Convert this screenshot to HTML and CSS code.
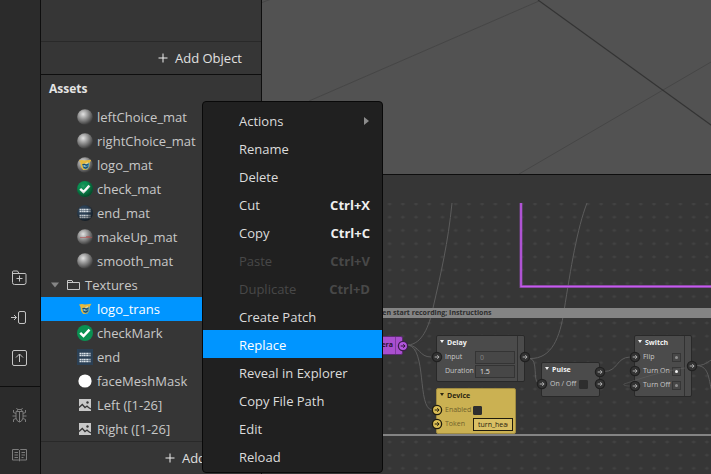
FILE: index.html
```html
<!DOCTYPE html>
<html lang="en">
<head>
<meta charset="utf-8">
<title>Patch editor</title>
<link rel="stylesheet" href="styles.css">
</head>
<body>
<svg class="defs" aria-hidden="true">
  <defs>
    <radialGradient id="ball" cx="38%" cy="32%" r="68%">
      <stop offset="0" stop-color="#e2e2e2"/><stop offset=".35" stop-color="#a8a8a8"/><stop offset="1" stop-color="#3c3c3c"/>
    </radialGradient>
    <radialGradient id="shade" cx="38%" cy="32%" r="68%">
      <stop offset="0" stop-color="#fff" stop-opacity=".15"/><stop offset=".4" stop-color="#000" stop-opacity="0"/><stop offset="1" stop-color="#000" stop-opacity=".5"/>
    </radialGradient>
    <symbol id="sphere" viewBox="0 0 16 16"><circle cx="8" cy="8" r="7.8" fill="url(#ball)"/></symbol>
    <symbol id="logo" viewBox="0 0 16 16">
      <path d="M2 3.500 5 3l3 .6 6.500-.8-1.500 2.400-.8 5-2 2.600-4 .2-2.200-3L3.500 6z" fill="#e5b93c"/>
      <path d="M5 7.500 7 6.500l2 .5 3.500-1.500-.5 4.500-2.500 2.500-3-1z" fill="#4a95b8"/>
      <path d="M5.500 7.500h2.500l.8.800 2.500-.8M6.500 10l2 1.200 2.500-1.400" fill="none" stroke="#1f4560" stroke-width="1.100"/>
      <path d="M8.500 6.500 11 5.800M7 9h1.500" stroke="#efe6c0" stroke-width=".9"/>
    </symbol>
    <symbol id="check" viewBox="0 0 16 16">
      <circle cx="8" cy="8" r="8" fill="#0a9152"/><path d="m3.200 7.800 3.300 3.200 6-6.400" fill="none" stroke="#fff" stroke-width="2.500"/>
    </symbol>
    <symbol id="port" viewBox="0 0 12 12">
      <circle cx="6" cy="6" r="4.600" fill="var(--fill)" stroke="var(--ring)" stroke-width="1.300"/>
      <path d="M3.700 6h4.300M6.300 4.200 8.100 6 6.300 7.800" fill="none" stroke="var(--arrow)"/>
    </symbol>
    <symbol id="picture" viewBox="0 0 16 16">
      <path d="M2 2h12v12H2z" fill="#c8c8c8"/><path d="m2 10.500 3.300-3 2.700 3 2-1.500 1.500 1.500L14 12" fill="none" stroke="#363636" stroke-width="1.300"/><circle cx="10.500" cy="5.500" r="1.200" fill="#363636"/>
    </symbol>
    <symbol id="end-tile" viewBox="0 0 16 16">
      <path d="M0 0h16v16H0z" fill="#2b4055"/><path d="M2.500 4.500h11M2.500 6.500h11M2.500 10.500h11M2.500 12.500h11" stroke="#dde4ea" stroke-width="1.400" stroke-dasharray="1.800 .4 1.200 .4 2.400 .5"/>
    </symbol>
    <clipPath id="round"><circle cx="8" cy="8" r="7.800"/></clipPath>
  </defs>
</svg>
<div class="app">
  <nav class="rail" aria-label="Tools">
    <div class="rail-group rail-top">
      <button aria-label="Add asset folder"><svg viewBox="0 0 18 18"><path d="M2.500 3v10.500a2 2 0 0 0 2 2h9.500a2 2 0 0 0 2-2V5.500a1 1 0 0 0-1-1H9L7.500 2h-4a1 1 0 0 0-1 1zM2.500 4.500H9M6.500 9.500h6M9.500 6.500v6"/></svg></button>
      <button aria-label="Import"><svg viewBox="0 0 18 18"><rect x="8.500" y="2.500" width="7" height="12" rx="1.500"/><path d="M1 8.500h5.500M4 6l2.500 2.500L4 11"/></svg></button>
      <button aria-label="Publish"><svg viewBox="0 0 18 18"><rect x="2.500" y="1.500" width="14" height="15" rx="1.500"/><path d="M9.500 13V5M6 8.500 9.500 5 13 8.500"/></svg></button>
    </div>
    <div class="rail-group rail-bottom">
      <button aria-label="Report a bug"><svg viewBox="0 0 18 18"><path d="M6 5.500h7v6.500l-1.500 3-2 1-2-1L6 12zM7 5.500 7.500 3.500h4l.5 2M9.500 6v10M6.500 2l1 1.500M12.500 2l-1 1.500M6 7.500 3.500 6.500V4M13 7.500l2.500-1V4M6 10H2.500M13 10h3.500M6 12.500l-2.500 1V16M13 12.500l2.500 1V16"/></svg></button>
      <button aria-label="Documentation"><svg viewBox="0 0 18 18"><path d="M9.500 4.500 8.500 3.500h-6v10.500h6l1 .8 1-.8h6V3.500h-6zV15M4.500 6.500H8M4.500 9H8M4.500 11.500H8M11.500 6.500h3.500M11.500 9h3.500M11.500 11.500h2"/></svg></button>
    </div>
  </nav>

  <aside class="panel">
    <div class="scene"></div>
    <div class="add-row"><button class="add"><svg viewBox="0 0 10 10"><path d="M5 .5v9M.5 5h9"/></svg>Add Object</button></div>
    <section class="assets">
      <h2>Assets</h2>
      <ul class="tree">
        <li><button><svg><use href="#sphere"/></svg>leftChoice_mat</button></li>
        <li><button><svg><use href="#sphere"/></svg>rightChoice_mat</button></li>
        <li><button><svg viewBox="0 0 16 16"><use href="#sphere"/><g clip-path="url(#round)"><use href="#logo"/></g></svg>logo_mat</button></li>
        <li><button><svg viewBox="0 0 16 16"><use href="#check"/><circle cx="8" cy="8" r="8" fill="url(#shade)"/></svg>check_mat</button></li>
        <li><button><svg viewBox="0 0 16 16"><g clip-path="url(#round)"><use href="#end-tile"/></g><circle cx="8" cy="8" r="8" fill="url(#shade)"/></svg>end_mat</button></li>
        <li><button><svg viewBox="0 0 16 16"><use href="#sphere"/><path d="M3 8.500h12M9 7.500h4" stroke="#b54c4c" stroke-opacity=".6"/></svg>makeUp_mat</button></li>
        <li><button><svg><use href="#sphere"/></svg>smooth_mat</button></li>
        <li><button class="folder" aria-expanded="true"><svg class="twist" viewBox="0 0 8 6"><path d="M0 .5h8L4 5.500z"/></svg><svg class="dir" viewBox="0 0 14 12"><path d="M.5 10.500V1.500h4.500l1 2h6.500v7zM.5 3.500H6"/></svg>Textures</button></li>
        <li><button class="selected"><svg><use href="#logo"/></svg>logo_trans</button></li>
        <li><button><svg><use href="#check"/></svg>checkMark</button></li>
        <li><button><svg><use href="#end-tile"/></svg>end</button></li>
        <li><button><svg viewBox="0 0 16 16"><circle cx="8" cy="8" r="6.600" fill="#fff"/></svg>faceMeshMask</button></li>
        <li><button><svg><use href="#picture"/></svg>Left ([1-26]</button></li>
        <li><button><svg><use href="#picture"/></svg>Right ([1-26]</button></li>
      </ul>
    </section>
    <div class="add-row"><button class="add"><svg viewBox="0 0 10 10"><path d="M5 .5v9M.5 5h9"/></svg>Add Asset</button></div>
  </aside>

  <main class="work">
    <div class="viewport">
      <svg aria-hidden="true"><g transform="translate(-262 0)" fill="none">
        <path d="M309 101 539 1M262 2.500l8-3M519 174 711 62l200-117" stroke="#464646"/>
        <path d="M538 0 711 125l200 144.500" stroke="#343434" stroke-width="1.200"/>
      </g></svg>
    </div>
    <div class="graph">
      <div class="canvas">
        <svg class="layer" aria-hidden="true">
          <defs><pattern id="dots" x="2" y="-5.600" width="13.220" height="13.220" patternUnits="userSpaceOnUse"><path d="M4.600 6.600h4M6.600 5.100v3" stroke="#454545"/></pattern></defs>
          <rect width="100%" height="100%" fill="url(#dots)"/>
          <g transform="translate(-262 -203)" fill="none" stroke="#5c5c5c">
            <path d="M408 345C422 344 429 327 433 308 441 273 448 243 452 203M408 345c12 1 11 12 23 12M408 345c19 3 9 63 24 65"/>
            <path d="M530 358.500C552 359 560 337 564 311 571 267 577 229 587 203M530 358.500c8 1 3 22 8 24.500M604 371.500c14 0 12-14 26-14.500M697 365.500c10 0 12-6 20-8M697 365.500c13 1 11 14 16 30"/>
            <path d="M521 203v83.500h400" stroke="#7b4691" stroke-width="3"/>
            <path d="M521 203v83.500h400" stroke="#c65af0" stroke-width="1.400"/>
          </g>
        </svg>
        <div class="note"><span>When start recording; Instructions</span></div>

        <section class="node camera"><h3>Camera</h3><svg class="port out p1"><use href="#port"/></svg></section>

        <section class="node strip delay">
          <h3>Delay</h3>
          <label for="d-in">Input</label><input id="d-in" type="text" value="0" disabled>
          <label for="d-du">Duration</label><input id="d-du" type="text" value="1.5">
          <svg class="port in p2"><use href="#port"/></svg><svg class="port out p2"><use href="#port"/></svg>
        </section>

        <section class="node device">
          <h3>Device</h3>
          <label for="v-en">Enabled</label><input id="v-en" type="checkbox">
          <label for="v-to">Token</label><input id="v-to" type="text" value="turn_head">
          <svg class="port in p2"><use href="#port"/></svg><svg class="port in p3"><use href="#port"/></svg>
        </section>

        <section class="node pulse">
          <h3>Pulse</h3>
          <label for="p-on">On / Off</label><input id="p-on" type="checkbox">
          <svg class="port in p2"><use href="#port"/></svg><svg class="port out p1"><use href="#port"/></svg><svg class="port out p2"><use href="#port"/></svg>
        </section>

        <section class="node strip switch">
          <h3>Switch</h3>
          <span>Flip</span><button class="pulse-dot" aria-label="Flip"></button>
          <span>Turn On</span><button class="pulse-dot lit" aria-label="Turn On"></button>
          <span>Turn Off</span><button class="pulse-dot" aria-label="Turn Off"></button>
          <svg class="port in p2"><use href="#port"/></svg><svg class="port in p3"><use href="#port"/></svg><svg class="port in p4"><use href="#port"/></svg><svg class="port out mid"><use href="#port"/></svg>
        </section>
        <svg class="layer wires" aria-hidden="true"><path d="M423 165C394 169 366 180 362 181c-1 1 1 2 6 2" fill="none" stroke="#656565" stroke-opacity=".5"/></svg>
      </div>
    </div>
  </main>
</div>

<div class="menu" role="menu">
  <button role="menuitem">Actions<svg class="more" viewBox="0 0 5 8"><path d="M0 0v8l5-4z"/></svg></button>
  <button role="menuitem">Rename</button>
  <button role="menuitem">Delete</button>
  <button role="menuitem">Cut<kbd>Ctrl+X</kbd></button>
  <button role="menuitem">Copy<kbd>Ctrl+C</kbd></button>
  <button role="menuitem" disabled>Paste<kbd>Ctrl+V</kbd></button>
  <button role="menuitem" disabled>Duplicate<kbd>Ctrl+D</kbd></button>
  <button role="menuitem">Create Patch</button>
  <button role="menuitem" class="selected">Replace</button>
  <button role="menuitem">Reveal in Explorer</button>
  <button role="menuitem">Copy File Path</button>
  <button role="menuitem">Edit</button>
  <button role="menuitem">Reload</button>
</div>
</body>
</html>
```
FILE: styles.css
```css
:root {
  --panel: #363636;
  --edge: #0e0e0e;
  --accent: #0095ff;
}
* { box-sizing: border-box; }
body {
  margin: 0;
  overflow: hidden;
  background: var(--panel);
  color: #c8c8c8;
  font: 13px/24px "Open Sans", "Noto Sans", sans-serif;
}
button {
  border: 0;
  padding: 0;
  background: none;
  color: inherit;
  font: inherit;
  text-align: left;
}
h2, h3, ul { margin: 0; padding: 0; }
ul { list-style: none; }
.defs { position: absolute; width: 0; height: 0; }
.app {
  display: grid;
  grid-template-columns: 41px 221px 1fr;
  height: 100vh;
}

/* Tool rail */
.rail {
  display: flex;
  flex-direction: column;
  background: #2b2b2b;
  border-right: 1px solid var(--edge);
}
.rail-group { display: flex; flex-direction: column; gap: 22px; padding-left: 10px; }
.rail-top { flex: 1; justify-content: flex-end; padding-bottom: 19px; }
.rail-bottom { border-top: 1px solid var(--edge); padding-top: 19px; padding-bottom: 10px; }
.rail button { display: flex; width: 18px; height: 18px; }
.rail svg { width: 18px; height: 18px; fill: none; stroke: #c4c4c4; }
.rail .rail-bottom svg { stroke: #7c7c7c; }

/* Scene and asset lists */
.panel {
  display: flex;
  flex-direction: column;
  min-height: 0;
  background: var(--panel);
  border-right: 1px solid var(--edge);
}
.scene { flex: 1; }
.add-row {
  display: flex;
  justify-content: flex-end;
  padding: 4px 19px 4px 0;
  border-top: 1px solid #292929;
}
.add { display: flex; align-items: center; gap: 7px; color: #e0e0e0; }
.add svg { width: 10px; height: 10px; stroke: #f0f0f0; }
.assets { border-top: 1px solid var(--edge); }
h2 { padding: 2px 8px; font-size: 12px; line-height: 24px; color: #e4e4e4; }
.tree { padding-top: 2px; }
.tree button { display: flex; align-items: center; gap: 4px; width: 100%; height: 24px; padding-left: 36px; }
.tree svg { width: 16px; height: 16px; flex: none; }
.tree .folder { padding-left: 10px; }
.tree .folder .twist { width: 8px; height: 6px; fill: #858585; margin-right: 4px; }
.tree .folder .dir { width: 14px; height: 12px; fill: none; stroke: #c8c8c8; }
.tree .selected, .menu .selected { background: var(--accent); color: #fff; }

/* Viewport and graph */
.work { display: grid; grid-template-rows: 175px 1fr; min-width: 0; }
.viewport { background: #525252; border-bottom: 1px solid var(--edge); overflow: hidden; }
.viewport svg { display: block; width: 100%; height: 100%; }
.graph { display: flex; padding-top: 28px; min-height: 0; }
.canvas { position: relative; flex: 1; overflow: hidden; font-size: 7px; }
.layer { position: absolute; inset: 0; width: 100%; height: 100%; }
.wires { pointer-events: none; }
.note {
  position: absolute;
  left: -8px;
  right: -8px;
  top: 105px;
  height: 128px;
  border-bottom: 2px solid #848484;
  color: #2c2c2c;
  font-weight: 700;
  line-height: 10px;
}
.note span { display: block; padding-left: 117px; background: #848484; }

.node {
  --fill: #333;
  --ring: #202020;
  --arrow: #b0b0b0;
  position: absolute;
  display: grid;
  align-items: center;
  align-content: start;
  grid-auto-rows: 14px;
  padding-left: 8px;
  border: 1px solid #292929;
  border-radius: 2px;
  background: #4b4b4b;
  color: #c8c8c8;
  line-height: 14px;
  white-space: nowrap;
}
.node h3 { grid-column: 1 / -1; color: #f2f2f2; font-size: inherit; line-height: 14px; }
.node h3::before {
  content: "";
  display: inline-block;
  margin: 0 3px 2px -5px;
  border: 2px solid transparent;
  border-top: 3px solid currentColor;
  border-bottom: 0;
}
.strip::after {
  content: "";
  position: absolute;
  inset: 0 0 0 auto;
  width: 6px;
  border-left: 1px solid #323232;
}
.node input { appearance: none; margin: 0; border: 1px solid #343434; border-radius: 0; background: #474747; color: #e0e0e0; font: inherit; }
.node input[type="text"] { width: 40px; height: 13px; padding: 0 4px; line-height: 11px; }
.node input[type="checkbox"] { width: 9px; height: 9px; background: #2e2e2e; border-color: #2e2e2e; border-radius: 1px; }
.node input:disabled { color: #828282; }
.port { position: absolute; z-index: 1; width: 12px; height: 12px; }
.in { left: -6px; }
.out { right: -7px; }
.p1 { top: 3px; }
.p2 { top: 15px; }
.p3 { top: 29px; }
.p4 { top: 44px; }
.mid { top: 24px; }

.camera { left: 100px; top: 133px; width: 41px; height: 19px; background: #a94fcf; border-color: #5d2a73; --fill: #b256dc; --ring: #3d1d4b; --arrow: #2b1433; padding: 0 9px 0 0; }
.camera h3 { color: #2a1433; text-align: right; line-height: 17px; }
.camera h3::before { content: none; }
.camera::after { content: ""; position: absolute; inset: 0 0 0 auto; width: 6px; border-left: 1px solid #7f3b9c; }
.delay { left: 174px; top: 132px; width: 89px; height: 47px; grid-template-columns: 30px 40px; }
.device { left: 174px; top: 185px; width: 80px; height: 46px; grid-template-columns: 28px 40px; background: #cbb152; border-color: #a08b40; color: #71622c; --fill: #dabd55; --ring: #1f1b0d; --arrow: #1f1b0d; }
.device h3 { color: #2c2711; }
.device input[type="text"] { background: #d9c065; border-color: #1f1b0d; color: #1f1b0d; }
.pulse { left: 279px; top: 159px; width: 59px; height: 35px; grid-template-columns: 29px 10px; }
.switch { left: 372px; top: 132px; width: 58px; height: 62px; grid-template-columns: 29px 9px; }
.pulse-dot { display: grid; place-items: center; width: 9px; height: 9px; border: 1px solid #363636; background: #474747; }
.pulse-dot::before { content: ""; width: 3px; height: 3px; border-radius: 50%; background: #909090; }
.lit::before { background: #f0f0f0; }

/* Context menu */
.menu {
  position: absolute;
  left: 202px;
  top: 101px;
  width: 181px;
  padding: 4px 0 2px;
  background: #202020;
  border: 1px solid #090909;
  border-radius: 4px;
  color: #dcdcdc;
}
.menu button {
  display: flex;
  align-items: center;
  justify-content: space-between;
  width: 100%;
  height: 28px;
  padding: 1px 12px 0 36px;
}
.menu button:disabled { color: #484848; }
.menu kbd { font: inherit; font-weight: 700; }
.menu button:enabled kbd { color: #efefef; }
.more { width: 5px; height: 8px; fill: #8c8c8c; margin-right: 1px; }
```
